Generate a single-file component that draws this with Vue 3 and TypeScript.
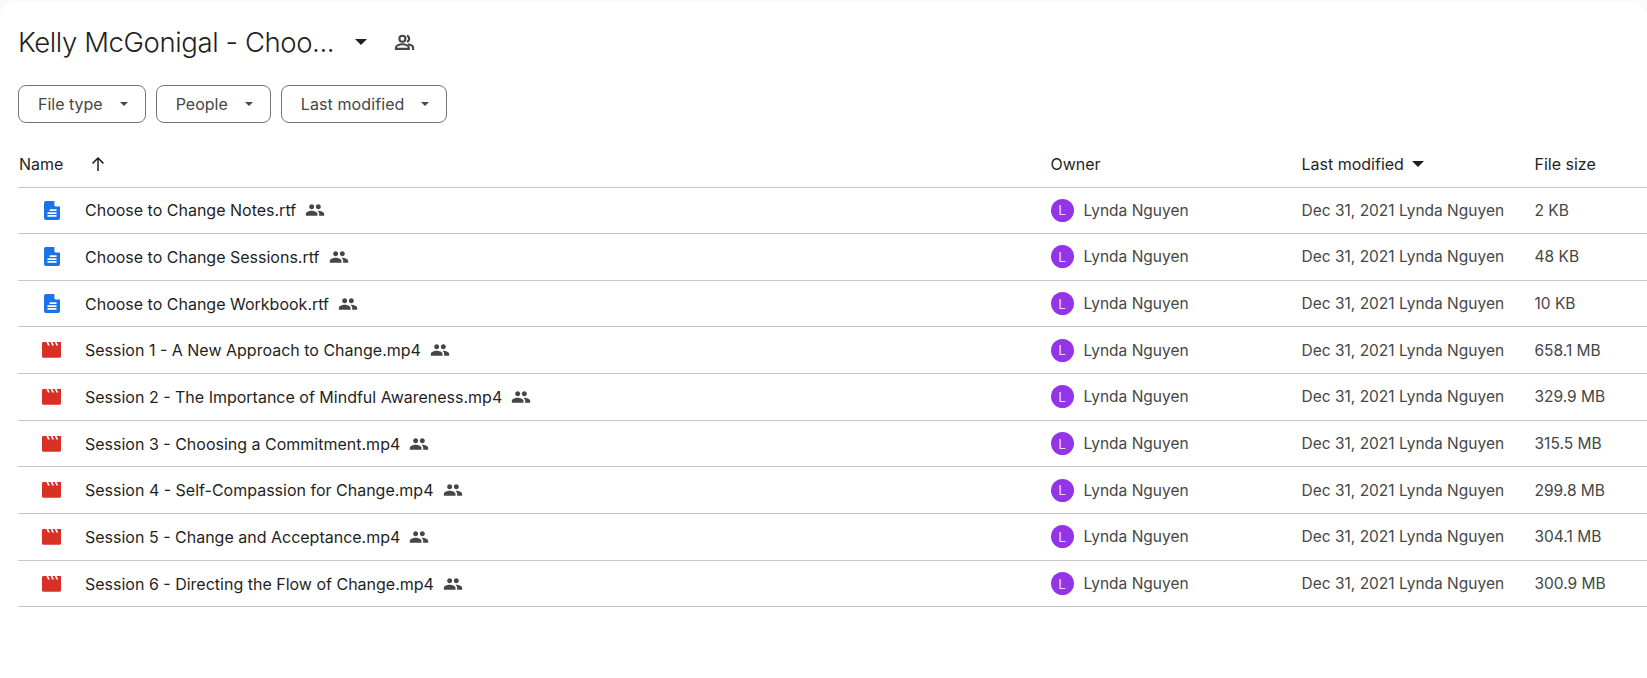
<script setup lang="ts">
interface FileRow { name: string; kind: 'doc' | 'video'; size: string }
const rows: FileRow[] = [
  { name: 'Choose to Change Notes.rtf', kind: 'doc', size: '2 KB' },
  { name: 'Choose to Change Sessions.rtf', kind: 'doc', size: '48 KB' },
  { name: 'Choose to Change Workbook.rtf', kind: 'doc', size: '10 KB' },
  { name: 'Session 1 - A New Approach to Change.mp4', kind: 'video', size: '658.1 MB' },
  { name: 'Session 2 - The Importance of Mindful Awareness.mp4', kind: 'video', size: '329.9 MB' },
  { name: 'Session 3 - Choosing a Commitment.mp4', kind: 'video', size: '315.5 MB' },
  { name: 'Session 4 - Self-Compassion for Change.mp4', kind: 'video', size: '299.8 MB' },
  { name: 'Session 5 - Change and Acceptance.mp4', kind: 'video', size: '304.1 MB' },
  { name: 'Session 6 - Directing the Flow of Change.mp4', kind: 'video', size: '300.9 MB' },
]
const filters = ['File type', 'People', 'Last modified']
const peoplePath = 'M16 11c1.66 0 2.99-1.34 2.99-3S17.66 5 16 5c-1.66 0-3 1.34-3 3s1.34 3 3 3zm-8 0c1.66 0 2.99-1.34 2.99-3S9.66 5 8 5C6.34 5 5 6.34 5 8s1.34 3 3 3zm0 2c-2.33 0-7 1.17-7 3.5V19h14v-2.5c0-2.33-4.67-3.5-7-3.5zm8 0c-.29 0-.62.02-.97.05 1.16.84 1.97 1.97 1.97 3.45V19h6v-2.5c0-2.33-4.67-3.5-7-3.5z'
</script>

<template>
  <div class="page">
    <main class="card">
      <header class="title-bar">
        <h1 class="title">Kelly McGonigal - Choo...</h1>
        <svg class="title-caret" viewBox="0 0 12 6" width="12" height="6"><path d="M0 0h12L6 6z" fill="#1f1f1f" /></svg>
        <svg class="title-people" viewBox="0 0 20 20" width="21" height="21" fill="none" stroke="#444746" stroke-width="2">
          <circle cx="8" cy="6.4" r="2.9" />
          <path d="M1.9 16.1v-1.3c0-1.9 3.3-3.1 6.1-3.1s6.1 1.2 6.1 3.1v1.3z" />
          <path d="M12.3 3.6a2.9 2.9 0 0 1 0 5.6" />
          <path d="M14.4 11.9c2.2.5 3.8 1.5 3.8 3v1.2" stroke-linecap="square" />
        </svg>
      </header>

      <div class="filters">
        <button v-for="f in filters" :key="f" class="chip">
          <span>{{ f }}</span>
          <svg viewBox="0 0 8 4" width="8" height="4"><path d="M0 0h8L4 4z" fill="#444746" /></svg>
        </button>
      </div>

      <div class="table">
        <div class="row head">
          <div class="cell name-head">
            <span>Name</span>
            <svg class="arrow" viewBox="0 0 16 16" width="16" height="16" fill="none" stroke="#1f1f1f" stroke-width="1.5"><path d="M8 15V2M2.6 7.4 8 2l5.4 5.4" /></svg>
          </div>
          <div class="cell">Owner</div>
          <div class="cell modified-head">
            <span>Last modified</span>
            <svg viewBox="0 0 12 6" width="12" height="6"><path d="M0 0h12L6 6z" fill="#1f1f1f" /></svg>
          </div>
          <div class="cell">File size</div>
        </div>

        <div v-for="r in rows" :key="r.name" class="row">
          <div class="cell name-cell">
            <span class="icon-box">
              <svg v-if="r.kind === 'doc'" viewBox="0 0 16 19" width="16" height="19">
                <path fill="#1a73e8" d="M2 0h8.4L16 5.6V17a2 2 0 0 1-2 2H2a2 2 0 0 1-2-2V2a2 2 0 0 1 2-2z" />
                <path fill="#fff" d="M10.4 0v4a1.6 1.6 0 0 0 1.6 1.6h4V5.2L10.8 0z" />
                <path fill="#fff" d="M5.6 8.3h6.9v1.7H5.6zM3.5 11.2h9v1.7h-9zM3.5 14.1h9v1.7h-9z" />
              </svg>
              <svg v-else viewBox="0 0 19 16" width="19" height="16">
                <path fill="#d93025" d="M1.4 0H19v14.2a1.6 1.6 0 0 1-1.6 1.6H1.6A1.6 1.6 0 0 1 0 14.2V1.4A1.4 1.4 0 0 1 1.4 0z" />
                <path fill="#fff" d="M4.4 0h1.8l1.6 3.6H6zM8.6 0h1.8L12 3.6h-1.8zM12.8 0h1.8l1.6 3.6h-1.8z" />
              </svg>
            </span>
            <span class="file-name">{{ r.name }}</span>
            <svg class="shared" viewBox="0 0 24 24" width="20" height="20"><path :d="peoplePath" fill="#444746" /></svg>
          </div>
          <div class="cell owner">
            <span class="avatar">L</span>
            <span>Lynda Nguyen</span>
          </div>
          <div class="cell muted">Dec 31, 2021 Lynda Nguyen</div>
          <div class="cell muted">{{ r.size }}</div>
        </div>
      </div>
    </main>
  </div>
</template>

<style>
html, body { margin: 0; background: #f8fafd; overflow: hidden; }
</style>

<style scoped>
.page {
  width: 1647px;
  height: 678px;
  padding-top: 2px;
  box-sizing: border-box;
  font-family: Inter, Roboto, sans-serif;
  color: #1f1f1f;
}
.card {
  height: 100%;
  background: #fff;
  border-radius: 16px 16px 0 0;
  padding-left: 18px;
  box-sizing: border-box;
}
.title-bar {
  display: flex;
  align-items: center;
  height: 80px;
}
.title {
  margin: 0;
  width: 337px;
  font-family: Inter, sans-serif;
  font-size: 27.5px;
  font-weight: 300;
  letter-spacing: -0.4px;
  white-space: nowrap;
}
.title-people { margin-left: 27px; }
.filters {
  display: flex;
  gap: 10px;
  margin-top: 3px;
}
.chip {
  display: flex;
  align-items: center;
  justify-content: space-between;
  height: 38px;
  padding: 0 17px 0 19px;
  background: #fff;
  border: 1px solid #747775;
  border-radius: 8px;
  color: #444746;
  font-family: Inter, sans-serif;
  font-size: 16px;
  gap: 17px;
  box-sizing: border-box;
}
.chip:last-child { letter-spacing: 0.1px; }
.table { margin-top: 18px; }
.row {
  display: grid;
  grid-template-columns: 1032.5px 251px 233px 1fr;
  align-items: center;
  height: 46.67px;
  box-sizing: border-box;
  border-bottom: 1px solid #c7c7c7;
  font-size: 15.5px;
}
.cell { display: flex; align-items: center; white-space: nowrap; }
.head { height: 46.5px; font-size: 16px; }
.name-head { padding-left: 1px; }
.arrow { margin-left: 27px; }
.modified-head { gap: 8px; }
.icon-box {
  width: 67px;
  display: flex;
  justify-content: center;
}
.file-name { font-size: 16px; }
.shared { margin-left: 9px; }
.owner { gap: 10px; color: #444746; }
.avatar {
  width: 23px;
  height: 23px;
  border-radius: 50%;
  background: #9334e6;
  color: #ead9fb;
  font-size: 13.5px;
  display: flex;
  align-items: center;
  justify-content: center;
}
.muted { color: #444746; }
</style>
